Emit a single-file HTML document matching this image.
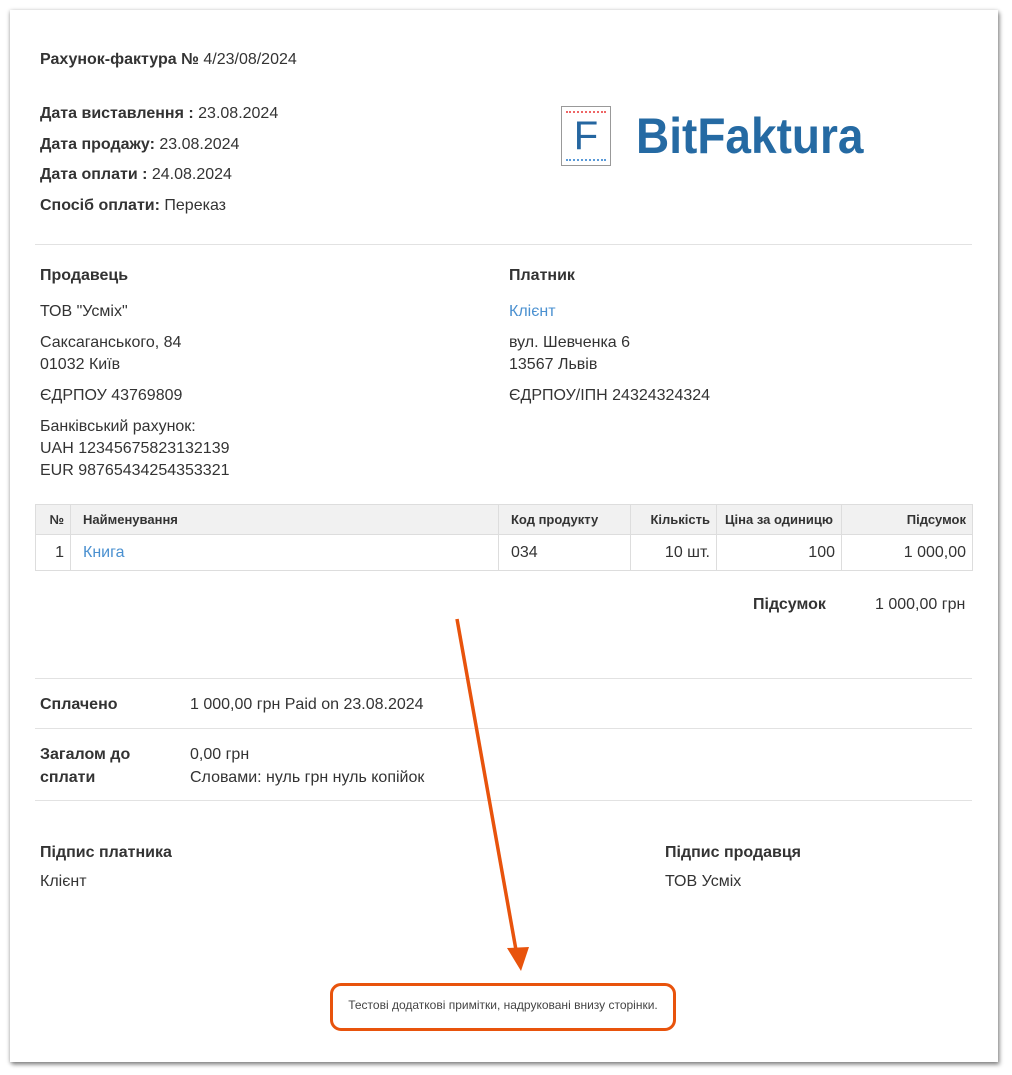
<!DOCTYPE html>
<html><head><meta charset="utf-8"><style>
body{margin:0;width:1012px;height:1075px;background:#fff;position:relative;overflow:hidden;font-family:"Liberation Sans",sans-serif;color:#333;font-size:16px}
.card{position:absolute;left:10px;top:10px;width:988px;height:1052px;background:#fff;box-shadow:0 1px 4px rgba(0,0,0,.35),2px 3px 4px rgba(0,0,0,.3)}
.t{position:absolute;line-height:18px;white-space:nowrap;margin-top:1px}
b{font-weight:bold}
.hr{position:absolute;left:35px;width:937px;height:1px;background:#e2e2e2}
.blue{color:#4a90d0}
table{position:absolute;left:35px;top:504px;width:938px;border-collapse:collapse;table-layout:fixed}
td,th{border:1px solid #ddd;padding:0 6px}
th{background:#f1f1f1;height:29px;font-size:13px;font-weight:bold;text-align:left}
td{height:35px}
.r{text-align:right}
.p{padding-left:12px}
</style></head><body>
<div class="card"></div>
<div class="t" style="left:40px;top:50px"><b>Рахунок-фактура №</b> 4/23/08/2024</div>
<div class="t" style="left:40px;top:104px"><b>Дата виставлення :</b> 23.08.2024</div>
<div class="t" style="left:40px;top:135px"><b>Дата продажу:</b> 23.08.2024</div>
<div class="t" style="left:40px;top:165px"><b>Дата оплати :</b> 24.08.2024</div>
<div class="t" style="left:40px;top:196px"><b>Спосіб оплати:</b> Переказ</div>

<div style="position:absolute;left:561px;top:106px;width:50px;height:60px;border:1.5px solid #999;box-sizing:border-box">
<div style="position:absolute;left:4px;right:4px;top:4px;border-top:2px dotted #e66"></div>
<div style="position:absolute;left:4px;right:4px;bottom:4px;border-top:2px dotted #5a9ad8"></div>
<div style="position:absolute;left:0;right:0;top:7px;text-align:center;font-size:40px;line-height:44px;color:#2566a0">F</div>
</div>
<div style="position:absolute;left:636px;top:108px;font-size:50px;line-height:56px;color:#256aa3;font-weight:bold;white-space:nowrap;transform-origin:0 0;transform:scaleX(0.92)">BitFaktura</div>

<div class="hr" style="top:244px"></div>
<div class="t" style="left:40px;top:266px"><b>Продавець</b></div>
<div class="t" style="left:40px;top:302px">ТОВ "Усміх"</div>
<div class="t" style="left:40px;top:333px">Саксаганського, 84</div>
<div class="t" style="left:40px;top:355px">01032 Київ</div>
<div class="t" style="left:40px;top:386px">ЄДРПОУ 43769809</div>
<div class="t" style="left:40px;top:417px">Банківський рахунок:</div>
<div class="t" style="left:40px;top:439px">UAH 12345675823132139</div>
<div class="t" style="left:40px;top:461px">EUR 98765434254353321</div>

<div class="t" style="left:509px;top:266px"><b>Платник</b></div>
<div class="t blue" style="left:509px;top:302px">Клієнт</div>
<div class="t" style="left:509px;top:333px">вул. Шевченка 6</div>
<div class="t" style="left:509px;top:355px">13567 Львів</div>
<div class="t" style="left:509px;top:386px">ЄДРПОУ/ІПН 24324324324</div>

<table>
<colgroup><col style="width:35px"><col style="width:428px"><col style="width:132px"><col style="width:86px"><col style="width:125px"><col></colgroup>
<tr><th class="r">№</th><th class="p">Найменування</th><th class="p">Код продукту</th><th class="r">Кількість</th><th style="text-align:center">Ціна за одиницю</th><th class="r">Підсумок</th></tr>
<tr><td class="r">1</td><td class="blue p">Книга</td><td class="p">034</td><td class="r">10 шт.</td><td class="r">100</td><td class="r">1 000,00</td></tr>
</table>

<div class="t" style="left:753px;top:595px"><b>Підсумок</b></div>
<div class="t" style="left:875px;top:595px">1 000,00 грн</div>

<div class="hr" style="top:678px"></div>
<div class="t" style="left:40px;top:695px"><b>Сплачено</b></div>
<div class="t" style="left:190px;top:695px">1 000,00 грн Paid on 23.08.2024</div>
<div class="hr" style="top:728px"></div>
<div class="t" style="left:40px;top:742px;line-height:23px"><b>Загалом до<br>сплати</b></div>
<div class="t" style="left:190px;top:742px;line-height:23px">0,00 грн<br>Словами: нуль грн нуль копійок</div>
<div class="hr" style="top:800px"></div>

<div class="t" style="left:40px;top:843px"><b>Підпис платника</b></div>
<div class="t" style="left:40px;top:872px">Клієнт</div>
<div class="t" style="left:665px;top:843px"><b>Підпис продавця</b></div>
<div class="t" style="left:665px;top:872px">ТОВ Усміх</div>

<div class="t" style="left:330px;top:997px;width:346px;text-align:center;font-size:12px;line-height:14px;color:#444">Тестові додаткові примітки, надруковані внизу сторінки.</div>
<div style="position:absolute;left:330px;top:983px;width:346px;height:48px;border:3px solid #e8530c;border-radius:11px;box-sizing:border-box"></div>
<svg style="position:absolute;left:0;top:0" width="1012" height="1075">
<line x1="457" y1="619" x2="516" y2="950" stroke="#e8530c" stroke-width="3.5"/>
<polygon points="507,948 529,947 521,971" fill="#e8530c"/>
</svg>
</body></html>
